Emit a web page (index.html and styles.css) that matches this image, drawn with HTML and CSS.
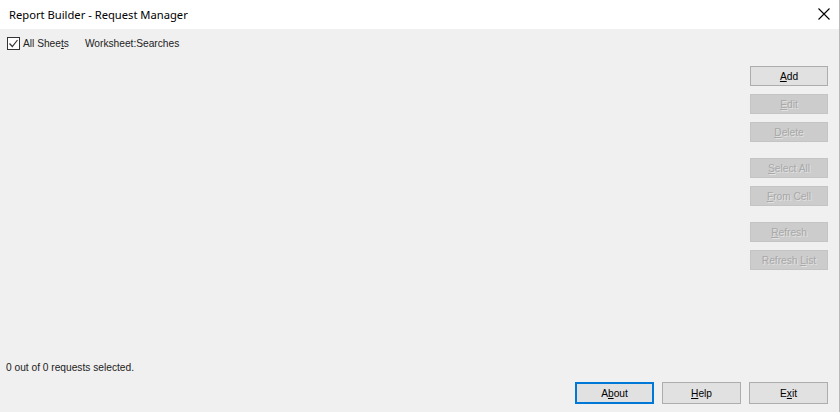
FILE: index.html
```html
<!DOCTYPE html>
<html>
<head>
    <link rel="stylesheet" href="styles.css">
</head>
<body>
    <div class="window">
        <div class="title-bar">
            <span class="title">Report Builder - Request Manager</span>
            <span class="close">
                <svg width="12" height="12" viewBox="0 0 12 12">
                    <path d="M0.5 0.5 L11.5 11.5 M11.5 0.5 L0.5 11.5" stroke="#000" stroke-width="1.1" fill="none"/>
                </svg>
            </span>
        </div>
        <div class="content">
            <div class="main">
                <div class="toolbar">
                    <label class="check">
                        <span class="box">
                            <svg width="11" height="11" viewBox="0 0 11 11">
                                <path d="M1.5 5.5 L4.3 8.5 L9.5 2" stroke="#333" stroke-width="1.2" fill="none"/>
                            </svg>
                        </span>
                        <span>All Shee<u>t</u>s</span>
                    </label>
                    <span class="sheet">Worksheet:Searches</span>
                </div>
                <div class="status">0 out of 0 requests selected.</div>
            </div>
            <div class="side">
                <button class="btn"><u>A</u>dd</button>
                <button class="btn off"><u>E</u>dit</button>
                <button class="btn off"><u>D</u>elete</button>
                <button class="btn off group"><u>S</u>elect All</button>
                <button class="btn off"><u>F</u>rom Cell</button>
                <button class="btn off group"><u>R</u>efresh</button>
                <button class="btn off">Refresh <u>L</u>ist</button>
            </div>
        </div>
        <div class="footer">
            <button class="btn wide default">A<u>b</u>out</button>
            <button class="btn wide"><u>H</u>elp</button>
            <button class="btn wide">E<u>x</u>it</button>
        </div>
    </div>
</body>
</html>
```

FILE: styles.css
```css
/* Request Manager dialog */
body {
    margin: 0;
    padding: 0;
    background-color: #f0f0f0;
    font-family: "Liberation Sans", Arial, sans-serif;
    font-size: 10.2px;
    color: #000;
}

.window {
    width: 839px;
    height: 412px;
    border-right: 1px solid #b9b9b9;
    display: flex;
    flex-direction: column;
    background-color: #f0f0f0;
}

.title-bar {
    height: 29px;
    background-color: #fff;
    display: flex;
    align-items: center;
    justify-content: space-between;
    padding: 0 8px 0 9px;
    flex-shrink: 0;
}

.title {
    font-family: "Noto Sans", "Open Sans", sans-serif;
    font-size: 11.2px;
    color: #000;
    margin-top: -1px;
}

.close {
    display: flex;
    margin-right: 1px;
    margin-top: -2px;
}

.content {
    flex: 1;
    display: flex;
    padding: 0 11px 0 6px;
}

.main {
    flex: 1;
    display: flex;
    flex-direction: column;
    justify-content: space-between;
}

.toolbar {
    display: flex;
    align-items: center;
    height: 28px;
}

.check {
    display: flex;
    align-items: center;
    gap: 3px;
    margin-left: 1px;
    color: #222;
}

.box {
    width: 11px;
    height: 11px;
    border: 1px solid #333;
    background-color: #fff;
    display: flex;
}

.sheet {
    margin-left: 16px;
    color: #222;
}

.status {
    color: #222;
    margin-bottom: 9px;
}

.side {
    width: 78px;
    display: flex;
    flex-direction: column;
    gap: 8px;
    padding-top: 37px;
}

.btn {
    height: 20px;
    width: 78px;
    padding: 0;
    background-color: #e1e1e1;
    border: 1px solid #adadad;
    font-family: "Liberation Sans", Arial, sans-serif;
    font-size: 10.2px;
    color: #000;
    cursor: pointer;
}

.btn.off {
    background-color: #cccccc;
    border-color: #c4c4c4;
    color: #a8a8a8;
    text-shadow: 1px 1px 0 #e2e2e2;
}

.btn.group {
    margin-top: 8px;
}

.footer {
    display: flex;
    justify-content: flex-end;
    gap: 8px;
    padding: 0 11px 8px 0;
    flex-shrink: 0;
}

.btn.wide {
    width: 79px;
    height: 22px;
}

.btn.default {
    border: 2px solid #0078d7;
}
```
